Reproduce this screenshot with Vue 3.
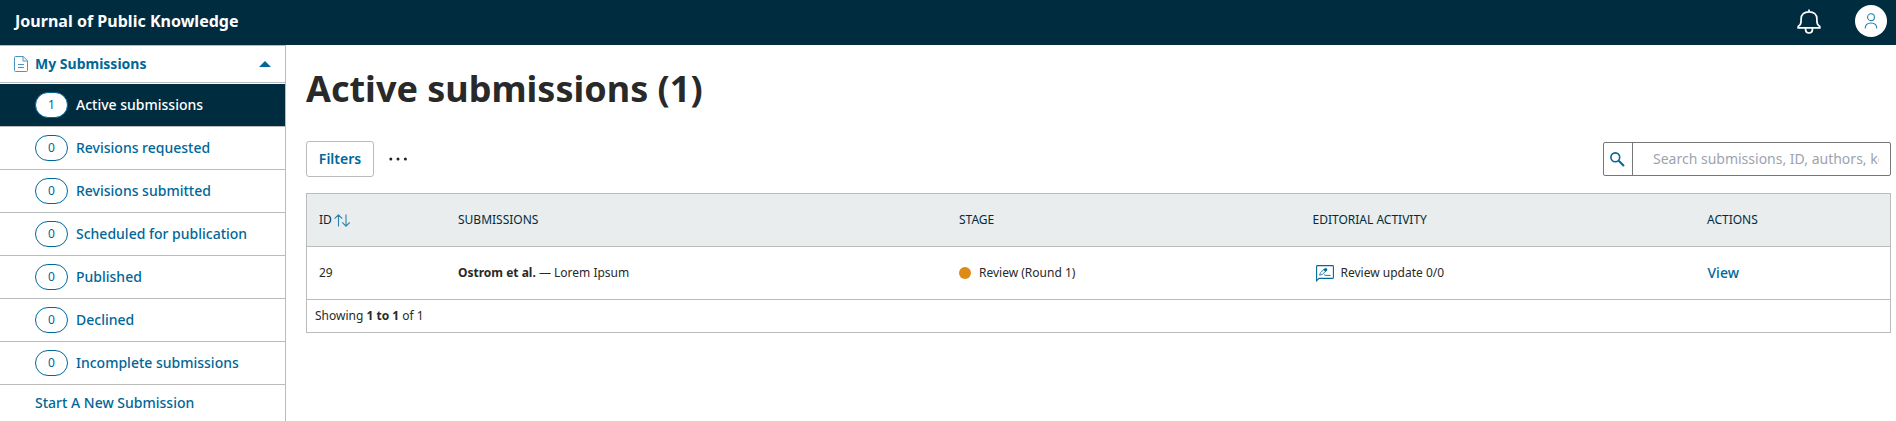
<script setup>
const views = [
  { name: 'Active submissions', count: 1, active: true },
  { name: 'Revisions requested', count: 0 },
  { name: 'Revisions submitted', count: 0 },
  { name: 'Scheduled for publication', count: 0 },
  { name: 'Published', count: 0 },
  { name: 'Declined', count: 0 },
  { name: 'Incomplete submissions', count: 0 },
]
</script>

<template>
  <div class="page">
    <header class="topbar">
      <div class="brand">Journal of Public Knowledge</div>
      <div class="tools">
        <svg class="bell" width="24" height="26" viewBox="0 0 24 26" fill="none" stroke="#fff" stroke-width="1.7">
          <path d="M12 0.6V3M1.2 18.8V17.4C3.4 16.2 4.1 14.8 4.1 12V9.9C4.1 5.6 7.2 2.8 12 2.8S19.9 5.6 19.9 9.9V12C19.9 14.8 20.6 16.2 22.8 17.4V18.8Z" />
          <path d="M8.6 19V20.8C8.6 22.6 10 24 12 24S15.4 22.6 15.4 20.8V19" />
        </svg>
        <div class="avatar">
          <svg width="14" height="16" viewBox="0 0 14 16" fill="none" stroke="#1f7fae" stroke-width="1.1">
            <circle cx="7" cy="4.2" r="3.4" />
            <path d="M1.2 15.6C1.2 12.2 3.6 10 7 10S12.8 12.2 12.8 15.6" />
          </svg>
        </div>
      </div>
    </header>

    <div class="body">
      <nav class="sidebar">
        <div class="group">
          <svg width="14" height="16" viewBox="0 0 14 16" fill="none" stroke="#4b97bf" stroke-width="1">
            <path d="M1.5 0.5H9.2L13.5 4.8V14.5Q13.5 15.5 12.5 15.5H1.5Q0.5 15.5 0.5 14.5V1.5Q0.5 0.5 1.5 0.5ZM9 0.7V5H13.3M4 8.5H10M4 11.5H10" />
          </svg>
          <span class="group-name">My Submissions</span>
          <svg class="caret" width="12" height="6" viewBox="0 0 12 6"><path d="M0 6L6 0L12 6Z" fill="#006798" /></svg>
        </div>
        <div v-for="view in views" :key="view.name" class="item" :class="{ active: view.active }">
          <span class="pill">{{ view.count }}</span>
          <span>{{ view.name }}</span>
        </div>
        <div class="start">Start A New Submission</div>
      </nav>

      <main class="main">
        <h1>Active submissions (1)</h1>
        <div class="controls">
          <button class="filters">Filters</button>
          <svg class="more" width="18" height="4" viewBox="0 0 18 4" fill="#222">
            <circle cx="1.8" cy="2" r="1.5" /><circle cx="9" cy="2" r="1.5" /><circle cx="16.4" cy="2" r="1.5" />
          </svg>
          <div class="search">
            <span class="search-icon">
              <svg width="15" height="15" viewBox="0 0 15 15" fill="none" stroke="#006798">
                <circle cx="5.3" cy="5.3" r="4.4" stroke-width="1.6" />
                <path d="M8.7 8.7L14 14" stroke-width="2" />
              </svg>
            </span>
            <span class="search-field"><span class="placeholder">Search submissions, ID, authors, keywords, etc.</span></span>
          </div>
        </div>

        <div class="table">
          <div class="row head">
            <span class="id">ID
              <svg width="16" height="13" viewBox="0 0 16 13" fill="none" stroke="#2e84ad" stroke-width="1.1">
                <path d="M4.5 12.5V1M0.6 4.6L4.5 0.8L8.2 4.6M12 0.5V12M8.2 8.4L12 12.2L15.7 8.4" />
              </svg>
            </span>
            <span>SUBMISSIONS</span>
            <span>STAGE</span>
            <span>EDITORIAL ACTIVITY</span>
            <span>ACTIONS</span>
          </div>
          <div class="row">
            <span>29</span>
            <span><b>Ostrom et al.</b> — Lorem Ipsum</span>
            <span class="stage"><i class="dot"></i>Review (Round 1)</span>
            <span class="activity">
              <svg width="18" height="17" viewBox="0 0 18 17" fill="none" stroke="#006798" stroke-width="1.1">
                <path d="M0.6 15.8V1.5Q0.6 0.6 1.5 0.6H16.5Q17.4 0.6 17.4 1.5V12.5Q17.4 13.4 16.5 13.4H3Z" />
                <path d="M3.6 10.2L4.4 7.8L8.4 4L10.2 5.8L6.2 9.5Z" stroke-width="0.8" />
                <path d="M7.6 4.8L9.2 3.4Q10 3 10.7 3.7T10.8 5.2L9.4 6.5Z" fill="#006798" stroke-width="0.5" />
                <path d="M8 10.5Q8.8 9 9.6 10.4H14.5" stroke-width="0.9" />
              </svg>
              Review update 0/0
            </span>
            <span class="view">View</span>
          </div>
          <div class="foot">Showing <b>1 to 1</b> of 1</div>
        </div>
      </main>
    </div>
  </div>
</template>

<style>
body {
  margin: 0;
  background: #fff;
  overflow: hidden;
}
</style>

<style scoped>
.page {
  height: 421px;
  overflow: hidden;
  display: flex;
  flex-direction: column;
  font-family: "Noto Sans", "Open Sans", sans-serif;
  font-size: 14px;
  color: #292929;
}
.topbar {
  height: 45px;
  flex: none;
  box-sizing: border-box;
  display: flex;
  align-items: center;
  justify-content: space-between;
  padding: 0 9px 3px 15px;
  background: #002c40;
}
.brand {
  color: #fff;
  font-size: 16px;
  font-weight: 700;
  line-height: 24px;
  letter-spacing: 0.02px;
}
.tools {
  display: flex;
  align-items: center;
  gap: 34px;
}
.bell {
  margin-top: 2px;
}
.avatar {
  width: 32px;
  height: 32px;
  border-radius: 50%;
  background: #fff;
  display: flex;
  align-items: center;
  justify-content: center;
}
.body {
  flex: 1;
  display: flex;
}
.sidebar {
  width: 285px;
  flex: none;
  border-top: 1px solid #bbb;
  border-right: 1px solid #bbb;
  color: #006798;
  font-weight: 500;
  line-height: 20px;
}
.group {
  height: 36px;
  display: flex;
  align-items: center;
  padding: 0 14px;
  border-bottom: 1px solid #bbb;
  margin-bottom: 1px;
}
.group-name {
  margin-left: 7px;
  font-weight: 700;
}
.caret {
  margin-left: auto;
}
.item {
  height: 42px;
  display: flex;
  align-items: center;
  gap: 8px;
  padding-left: 35px;
  border-bottom: 1px solid #bbb;
}
.active {
  background: #002c40;
  color: #fff;
}
.pill {
  box-sizing: border-box;
  width: 33px;
  height: 26px;
  border: 1px solid #006798;
  border-radius: 13px;
  background: #fff;
  color: #006798;
  font-size: 12px;
  font-weight: 400;
  line-height: 24px;
  text-align: center;
}
.start {
  padding: 8px 35px;
}
.main {
  flex: 1;
  padding: 20px 5px 0 20px;
}
h1 {
  margin: 0;
  font-size: 36px;
  font-weight: 700;
  line-height: 48px;
}
.controls {
  display: flex;
  align-items: center;
  height: 36px;
  margin: 28px 0 16px;
}
.filters {
  box-sizing: border-box;
  width: 68px;
  height: 36px;
  padding: 0;
  border: 1px solid #bbb;
  border-radius: 3px;
  background: #fff;
  color: #006798;
  font: 600 14px/20px "Noto Sans", sans-serif;
}
.more {
  margin-left: 15px;
}
.search {
  margin-left: auto;
  box-sizing: border-box;
  width: 288px;
  height: 34px;
  display: flex;
  border: 1px solid #777;
  border-radius: 2px;
}
.search-icon {
  width: 28px;
  display: flex;
  align-items: center;
  justify-content: center;
  border-right: 1px solid #777;
}
.search-icon svg {
  margin-right: 1px;
}
.search-field {
  flex: 1;
  min-width: 0;
  padding: 0 11px 0 20px;
}
.placeholder {
  display: block;
  overflow: hidden;
  white-space: nowrap;
  line-height: 32px;
  color: #9ca3af;
}
.table {
  border: 1px solid #bbb;
  font-size: 12px;
  line-height: 18px;
}
.row {
  display: grid;
  grid-template-columns: 139px 501px 353.5px 394.5px 1fr;
  align-items: center;
  height: 52px;
  padding-left: 12px;
  border-bottom: 1px solid #bbb;
}
.head {
  background: #e9eded;
  color: #002c40;
}
.id,
.stage,
.activity {
  display: flex;
  align-items: center;
}
.id {
  gap: 2px;
}
.dot {
  width: 12px;
  height: 12px;
  border-radius: 50%;
  background: #de8a17;
  margin-right: 8px;
}
.activity svg {
  margin: 0 6.5px 0 3.5px;
}
.view {
  padding-left: 0.5px;
  color: #006798;
  font-size: 14px;
  font-weight: 500;
  line-height: 20px;
}
.foot {
  height: 32px;
  padding-left: 8px;
  line-height: 32px;
}
</style>
